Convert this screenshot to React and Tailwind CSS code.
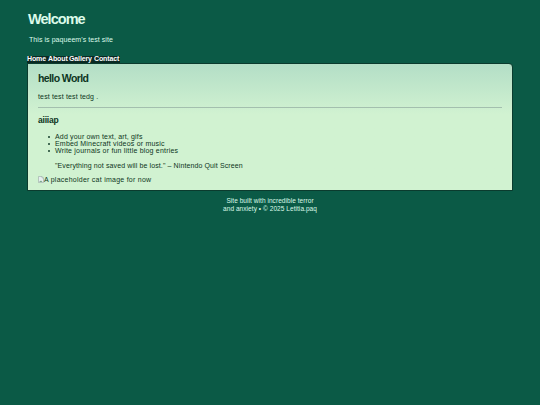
// Small personal homepage: title, nav links, one content card and a footer.

const navLinks = [
  { label: 'Home', size: 'w-[21px]' },
  { label: 'About', size: 'w-[21px]' },
  { label: 'Gallery', size: 'w-[25px]' },
  { label: 'Contact', size: 'w-[26px]' },
];

const ideas = [
  { text: 'Add your own text, art, gifs', tracking: 'tracking-[0.17px]' },
  { text: 'Embed Minecraft videos or music', tracking: 'tracking-[0.2px]' },
  { text: 'Write journals or fun little blog entries', tracking: 'tracking-[0.2px]' },
];

// Icon the browser shows in place of a missing image
const BrokenImage = () => (
  <svg width="6" height="7" viewBox="0 0 6 7" className="shrink-0">
    <path d="M0.5 0.5h3.5l1.5 1.5v4.5h-5z" fill="#e6eef0" stroke="#9aa9a4" strokeWidth="0.6" />
    <path d="M1 6l2-1.5L4.5 6z" fill="#78a888" />
    <path d="M4 0.5v1.5h1.5" fill="none" stroke="#9aa9a4" strokeWidth="0.5" />
  </svg>
);

const App = () => {
  return (
    <div className="h-[405px] w-[540px] overflow-hidden bg-[#0b5a46] font-['Liberation_Sans',sans-serif] text-[7px] leading-[7px] whitespace-nowrap text-[#0d3522]">
      <header className="h-[56px] pt-[12px] pl-[28px] text-[#dcfbea]">
        <h1 className="text-[14.5px] leading-[15px] font-bold tracking-[-0.96px]">Welcome</h1>
        <p className="mt-[9px] pl-px leading-[8px] tracking-[0.06px]">This is paqueem's test site</p>
      </header>

      <nav className="flex h-[7px] pl-[27px] font-bold text-white">
        <div className="flex h-[7px] bg-[#0a2923] leading-[6px] tracking-[-0.12px]">
          {navLinks.map((link) => (
            <a key={link.label} href="#" className={link.size}>{link.label}</a>
          ))}
        </div>
      </nav>

      {/* Content card */}
      <main className="ml-[27px] h-[128px] w-[486px] rounded-tr-[4px] border border-[#0b3b2e] bg-linear-to-b from-[#b3dec6] to-[#d1f2d1] to-40% px-[10px] pt-[8px]">
        <h2 className="text-[10.5px] leading-[13px] font-bold tracking-[-0.6px]">hello World</h2>
        <p className="mt-[8px] leading-[8px] tracking-[0.15px]">test test test tedg .</p>
        <hr className="mt-[6px] border-t border-[#a3bfae]" />
        <h3 className="mt-[7px] text-[8.5px] leading-[10px] font-bold tracking-[-0.2px]">aiiiap</h3>
        <ul className="mt-[8px] flex flex-col pl-[10px]">
          {ideas.map((idea) => (
            <li key={idea.text} className="flex h-[7px] items-center">
              <span className="mr-[5px] size-[2px] rounded-full bg-[#16402c]" />
              <span className={idea.tracking}>{idea.text}</span>
            </li>
          ))}
        </ul>
        <blockquote className="mt-[8px] pl-[17px] tracking-[0.11px]">
          "Everything not saved will be lost." – Nintendo Quit Screen
        </blockquote>
        <div className="mt-[7px] flex items-center">
          <BrokenImage />
          <span className="tracking-[0.25px]">A placeholder cat image for now</span>
        </div>
      </main>

      <footer className="mt-[6px] text-center text-[6.5px] leading-[7.5px] tracking-[0.06px] text-[#dcfbea]">
        <p>Site built with incredible terror</p>
        <p>and anxiety • © 2025 Letitia.paq</p>
      </footer>
    </div>
  );
};

export default App;
